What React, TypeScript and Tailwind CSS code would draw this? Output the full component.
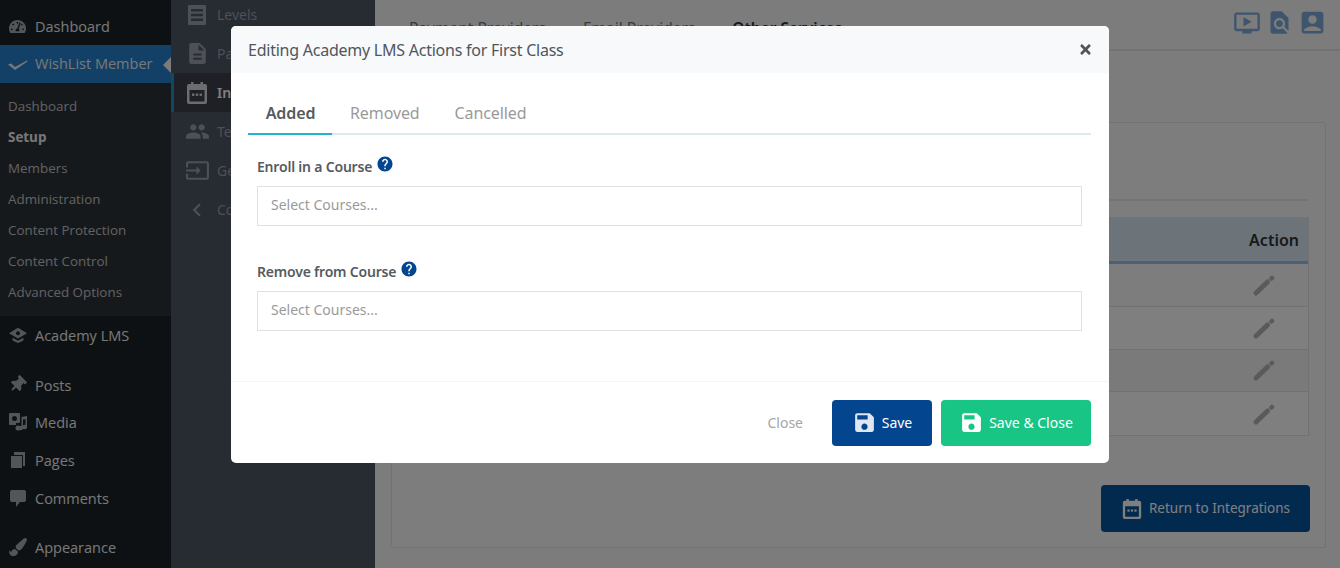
import React from "react";
import { MdSave, MdHelp, MdOndemandVideo, MdFindInPage, MdAccountBox, MdDescription, MdPeople, MdInput, MdChevronLeft } from "react-icons/md";
import { FaThumbtack, FaPaintBrush, FaTachometerAlt, FaTimes } from "react-icons/fa";

const Calendar = ({ className }: { className?: string }) => (
  <svg viewBox="0 0 24 24" className={className} fill="currentColor">
    <path fillRule="evenodd" d="M6 1h2.500v2h7V1H18v2h2a2 2 0 0 1 2 2v16a2 2 0 0 1-2 2H4a2 2 0 0 1-2-2V5a2 2 0 0 1 2-2h2V1zM4.500 9v11.500h15V9h-15z" />
    <rect x="7" y="12.500" width="2.400" height="2.400" /><rect x="10.800" y="12.500" width="2.400" height="2.400" /><rect x="14.600" y="12.500" width="2.400" height="2.400" />
  </svg>
);
const Check = ({ className }: { className?: string }) => (
  <svg viewBox="0 0 20 20" className={className} fill="currentColor"><path d="M0 10.500 3 9.500 7 13 19 6.500 19.500 7.500 7 16z" /></svg>
);
const MediaIcon = ({ className }: { className?: string }) => (
  <svg viewBox="0 0 20 20" className={className} fill="currentColor">
    <path fillRule="evenodd" d="M2 1h9a1 1 0 0 1 1 1v8a1 1 0 0 1-1 1H8v2H2a1 1 0 0 1-1-1V2a1 1 0 0 1 1-1zm4.500 3a2.500 2.500 0 1 0 0 5 2.500 2.500 0 0 0 0-5z" />
    <path d="M13.500 5 19 4v11a2.200 2.200 0 1 1-1.500-2V7l-2.500.5V16a2.200 2.200 0 1 1-1.500-2z" />
    <circle cx="10" cy="16" r="2.500" />
  </svg>
);
const PagesIcon = ({ className }: { className?: string }) => (
  <svg viewBox="0 0 20 20" className={className} fill="currentColor">
    <path d="M6 2h11v14h-2V5H6z" /><rect x="3" y="6" width="11" height="12" />
  </svg>
);
const CommentIcon = ({ className }: { className?: string }) => (
  <svg viewBox="0 0 20 20" className={className} fill="currentColor">
    <path d="M4 2h12a2 2 0 0 1 2 2v8a2 2 0 0 1-2 2h-4l-4 5v-5H4a2 2 0 0 1-2-2V4a2 2 0 0 1 2-2z" />
  </svg>
);
const ListIcon = ({ className }: { className?: string }) => (
  <svg viewBox="0 0 24 24" className={className} fill="currentColor">
    <path fillRule="evenodd" d="M4 2h16a1 1 0 0 1 1 1v18a1 1 0 0 1-1 1H4a1 1 0 0 1-1-1V3a1 1 0 0 1 1-1zm2 4v2.500h12V6H6zm0 4.800v2.500h12v-2.500H6zm0 4.800v2.500h12v-2.500H6z" />
  </svg>
);
const CapIcon = ({ className }: { className?: string }) => (
  <svg viewBox="0 0 20 20" className={className} fill="currentColor">
    <path fillRule="evenodd" d="M10 2 20 8l-10 6L0 8l10-6zm0 3.800a2.200 2.200 0 1 0 0 4.400 2.200 2.200 0 0 0 0-4.400z" />
    <path d="M4 13l6 3.500 6-3.500v3l-6 3-6-3z" />
  </svg>
);
const Pencil = ({ className }: { className?: string }) => (
  <svg viewBox="0 0 24 24" className={className} fill="none" stroke="currentColor" strokeLinecap="round">
    <path d="M4 20 15.500 9" strokeWidth="5" />
    <path d="M19.500 5.500 20 5" strokeWidth="4.500" />
  </svg>
);

const subItems = ["Dashboard", "Setup", "Members", "Administration", "Content Protection", "Content Control", "Advanced Options"];

function WpItem({ icon, label, className = "h-[38px]" }: { icon: React.ReactNode; label: string; className?: string }) {
  return (
    <div className={`flex items-center text-[#f0f0f1] ${className}`}>
      <span className="flex w-[35px] shrink-0 justify-center pl-[2px] pr-[2px] text-[#a7aaad]">{icon}</span>
      <span className="pt-[2px] text-[14.500px]">{label}</span>
    </div>
  );
}

function NavRow({ icon, label, className = "" }: { icon: React.ReactNode; label: string; className?: string }) {
  return (
    <div className={`flex h-[39px] items-center text-[#9aa1ad] ${className}`}>
      <span className="flex w-[46px] shrink-0 justify-center pl-[6px]">{icon}</span>
      <span className="text-[14px]">{label}</span>
    </div>
  );
}

function Field({ label }: { label: string }) {
  return (
    <div className="flex flex-col">
      <div className="flex h-[24px] items-center gap-[4px]">
        <span className="mt-[-2px] text-[14px] font-semibold tracking-[-0.2px] text-[#555b61]">{label}</span>
        <MdHelp className="mt-[-6px] size-[18px] text-[#03468f]" />
      </div>
      <div className="mt-[7px] flex h-[40px] items-center border border-[#dfe1e3] pb-[3px] pl-[13px] text-[14px] text-[#9a9a9a]">Select Courses...</div>
    </div>
  );
}

export default function App() {
  return (
    <div className="relative flex h-[568px] w-[1340px] overflow-hidden bg-[#f8f9fb] font-['Noto_Sans',sans-serif]">
      <aside className="flex w-[171px] shrink-0 flex-col bg-[#1d2327] pt-[7px] font-['Open_Sans',sans-serif]">
        <WpItem icon={<FaTachometerAlt className="size-[17px]" />} label="Dashboard" />
        <div className="relative flex h-[38px] items-center bg-[#2680cc] text-[#f0f0f1]">
          <span className="flex w-[35px] shrink-0 justify-center pl-[2px] pr-[2px]"><Check className="size-[20px]" /></span>
          <span className="text-[14.500px]">WishList Member</span>
          <span className="absolute right-0 top-[12px] h-0 w-0 border-y-[8px] border-r-[8px] border-y-transparent border-r-[#f8f9fb]" />
        </div>
        <div className="flex h-[233px] flex-col bg-[#2c3338] pt-[8px] text-[13.400px] text-[#c3c4c7]">
          {subItems.map((s) => (
            <div key={s} className={`flex h-[31px] items-center pl-[8px] ${s === "Setup" ? "font-bold text-[#f0f0f1]" : ""}`}>{s}</div>
          ))}
        </div>
        <WpItem icon={<CapIcon className="size-[18px]" />} label="Academy LMS" />
        <div className="h-[12px]" />
        <WpItem icon={<FaThumbtack className="size-[17px] rotate-45" />} label="Posts" className="h-[37px]" />
        <WpItem icon={<MediaIcon className="size-[20px]" />} label="Media" />
        <WpItem icon={<PagesIcon className="size-[20px]" />} label="Pages" />
        <WpItem icon={<CommentIcon className="size-[20px]" />} label="Comments" />
        <div className="h-[11px]" />
        <WpItem icon={<FaPaintBrush className="size-[18px]" />} label="Appearance" />
      </aside>

      <nav className="flex w-[204px] shrink-0 flex-col overflow-hidden bg-[#4e5664]">
        <div className="mt-[-5px] flex flex-col">
          <NavRow icon={<ListIcon className="size-[24px]" />} label="Levels" />
          <NavRow icon={<MdDescription className="size-[25px]" />} label="Pages" />
          <NavRow icon={<Calendar className="size-[24px] text-[#d8dade]" />} label="Integrations" className="border-l-[3px] border-[#2a8fc0] bg-[#3c414b] font-semibold text-white [&>span:first-child]:w-[43px] [&>span:first-child]:pl-[3px]" />
          <NavRow icon={<MdPeople className="size-[25px]" />} label="Team" />
          <NavRow icon={<MdInput className="size-[25px]" />} label="Get Help" />
          <NavRow icon={<MdChevronLeft className="size-[26px]" />} label="Collapse" />
        </div>
      </nav>

      <main className="flex min-w-0 flex-1 flex-col">
        <header className="flex h-[51px] shrink-0 items-start justify-between border-b-2 border-[#e3e5e8] pl-[34px] pr-[13px] pt-[17px]">
          <div className="flex gap-[37px] text-[15.500px] text-[#777]">
            <span>Payment Providers</span>
            <span>Email Providers</span>
            <span className="font-semibold text-[#333]">Other Services</span>
          </div>
          <div className="mt-[-9px] flex items-center gap-[5px] text-[#7fabdc]">
            <MdOndemandVideo className="size-[28px]" />
            <MdFindInPage className="size-[27px]" />
            <MdAccountBox className="size-[29px]" />
          </div>
        </header>
        <div className="pl-[16px] pr-[14px] pt-[71px]">
          <section className="flex h-[426px] flex-col rounded-[3px] border border-[#e4e5e7] bg-[#fbfbfc] pl-[17px] pr-[16px] pt-[76px]">
            <div className="h-[2px] bg-[#e8e9eb]" />
            <div className="mt-[16px] flex w-full flex-col border border-[#e4e5e7]">
              <div className="flex h-[46px] items-center justify-end border-b-[3px] border-[#94c0f0] bg-[#d9e8f5] pr-[9px] text-[16px] font-semibold text-[#333]">Action</div>
              {["bg-[#fbfbfc]", "bg-white", "bg-[#f4f5f6]", "bg-white"].map((c, i) => (
                <div key={i} className={`flex h-[42.750px] items-center justify-end border-b border-[#e4e5e7] pr-[32px] last:border-b-0 ${c}`}>
                  <Pencil className="size-[24px] text-[#b4b4b4]" />
                </div>
              ))}
            </div>
            <div className="mt-auto mb-[15px] mr-[-1px] flex justify-end">
              <button className="flex h-[47px] w-[209px] items-center justify-center gap-[6px] rounded-[4px] bg-[#05549f] text-[13.500px] text-white">
                <Calendar className="size-[22px]" />
                Return to Integrations
              </button>
            </div>
          </section>
        </div>
      </main>

      <div className="absolute inset-0 bg-black/50" />

      <div className="absolute left-[231px] top-[26px] flex h-[437px] w-[878px] flex-col overflow-hidden rounded-[5px] bg-white">
        <div className="flex h-[47px] shrink-0 items-center justify-between bg-[#f7f9fb] pl-[17px] pr-[16px]">
          <span className="text-[16px] tracking-[-0.24px] text-[#50565c]">Editing Academy LMS Actions for First Class</span>
          <FaTimes className="size-[15px] text-[#555]" />
        </div>
        <div className="flex flex-1 flex-col pl-[17px] pr-[18px] pt-[17px]">
          <div className="flex h-[45px] items-start border-b-2 border-[#dce9ed]">
            <div className="flex h-[45px] w-[84px] justify-center border-b-2 border-[#24b0d0] pl-[1px] pt-[11px] text-[16px] font-semibold tracking-[-0.1px] text-[#555b61]">Added</div>
            <div className="ml-[18px] pt-[11px] text-[16px] tracking-[-0.1px] text-[#9a9a9a]">Removed</div>
            <div className="ml-[35px] pt-[11px] text-[16px] tracking-[-0.1px] text-[#9a9a9a]">Cancelled</div>
          </div>
          <div className="mt-[20px] flex flex-col gap-[34px] pl-[9px] pr-[9px]">
            <Field label="Enroll in a Course" />
            <Field label="Remove from Course" />
          </div>
        </div>
        <div className="flex h-[82px] shrink-0 items-center justify-end border-t border-[#f4f5f6] pr-[18px]">
          <span className="mr-[29px] text-[14px] text-[#a5a5a5]">Close</span>
          <button className="flex h-[46px] w-[100px] items-center justify-center gap-[5px] rounded-[4px] bg-[#03468f] text-[14px] text-white">
            <MdSave className="size-[25px] text-[#dfe7f1]" />Save
          </button>
          <button className="ml-[9px] flex h-[46px] w-[150px] items-center justify-center gap-[5px] rounded-[4px] bg-[#19c585] text-[14px] text-white">
            <MdSave className="size-[25px]" />Save &amp; Close
          </button>
        </div>
      </div>
    </div>
  );
}
